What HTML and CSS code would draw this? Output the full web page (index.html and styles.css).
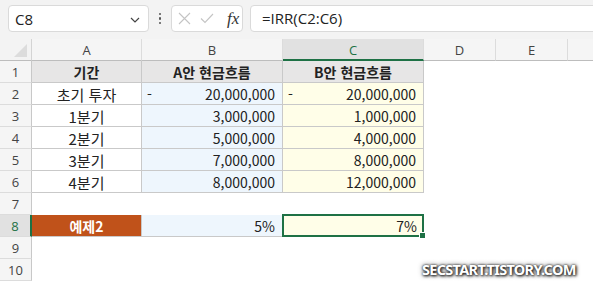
FILE: index.html
```html
<!DOCTYPE html>
<html lang="ko">
<head>
<meta charset="utf-8">
<link rel="stylesheet" href="styles.css">
</head>
<body>
<div class="toolbar">
  <div class="namebox"><span>C8</span>
    <svg class="chev" width="10" height="6" viewBox="0 0 10 6"><path d="M1 1 L5 5 L9 1" fill="none" stroke="#444" stroke-width="1.2"/></svg>
  </div>
  <div class="dots"><i></i><i></i><i></i></div>
  <div class="fxbox">
    <svg width="13" height="13" viewBox="0 0 13 13"><path d="M1 1 L12 12 M12 1 L1 12" stroke="#c4c4c4" stroke-width="1.1" fill="none"/></svg>
    <svg width="14" height="11" viewBox="0 0 14 11"><path d="M1 5.5 L5 9.5 L13 1" stroke="#c4c4c4" stroke-width="1.1" fill="none"/></svg>
    <span class="fx">fx</span>
  </div>
  <div class="formula">=IRR(C2:C6)</div>
</div>
<div class="sheet">
  <div class="corner"></div>
  <div class="ch">A</div>
  <div class="ch">B</div>
  <div class="ch sel">C</div>
  <div class="ch">D</div>
  <div class="ch">E</div>
  <div class="ch last"></div>

  <div class="rh">1</div>
  <div class="c hd">기간</div>
  <div class="c hd">A안 현금흐름</div>
  <div class="c hd">B안 현금흐름</div>
  <div class="e"></div><div class="e"></div><div class="e"></div>

  <div class="rh">2</div>
  <div class="c ctr">초기 투자</div>
  <div class="c num blue"><span>-</span><span>20,000,000</span></div>
  <div class="c num yel"><span>-</span><span>20,000,000</span></div>
  <div class="e"></div><div class="e"></div><div class="e"></div>

  <div class="rh">3</div>
  <div class="c ctr">1분기</div>
  <div class="c num blue"><span></span><span>3,000,000</span></div>
  <div class="c num yel"><span></span><span>1,000,000</span></div>
  <div class="e"></div><div class="e"></div><div class="e"></div>

  <div class="rh">4</div>
  <div class="c ctr">2분기</div>
  <div class="c num blue"><span></span><span>5,000,000</span></div>
  <div class="c num yel"><span></span><span>4,000,000</span></div>
  <div class="e"></div><div class="e"></div><div class="e"></div>

  <div class="rh">5</div>
  <div class="c ctr">3분기</div>
  <div class="c num blue"><span></span><span>7,000,000</span></div>
  <div class="c num yel"><span></span><span>8,000,000</span></div>
  <div class="e"></div><div class="e"></div><div class="e"></div>

  <div class="rh">6</div>
  <div class="c ctr">4분기</div>
  <div class="c num blue"><span></span><span>8,000,000</span></div>
  <div class="c num yel"><span></span><span>12,000,000</span></div>
  <div class="e"></div><div class="e"></div><div class="e"></div>

  <div class="rh">7</div>
  <div class="e"></div><div class="e"></div><div class="e"></div><div class="e"></div><div class="e"></div><div class="e"></div>

  <div class="rh selr">8</div>
  <div class="c ex">예제2</div>
  <div class="c num blue"><span></span><span>5%</span></div>
  <div class="c num yel active"><span></span><span>7%</span><i class="handle"></i></div>
  <div class="e"></div><div class="e"></div><div class="e"></div>

  <div class="rh">9</div>
  <div class="e"></div><div class="e"></div><div class="e"></div><div class="e"></div><div class="e"></div><div class="e"></div>

  <div class="rh">10</div>
  <div class="e"></div><div class="e"></div><div class="e"></div><div class="e"></div><div class="e"></div><div class="e"></div>
</div>
<div class="watermark">SECSTART.TISTORY.COM</div>
</body>
</html>
```
FILE: styles.css
```css
* { box-sizing: border-box; }
html, body { margin: 0; padding: 0; }
body {
  width: 593px;
  height: 287px;
  overflow: hidden;
  background: #ffffff;
  font-family: "Noto Sans CJK KR", "Noto Sans", sans-serif;
  position: relative;
}
.toolbar {
  height: 39px;
  background: #f3f3f3;
  display: flex;
  align-items: flex-start;
  padding: 5px 0 0 8px;
  overflow: hidden;
}
.namebox {
  width: 141px;
  height: 27px;
  background: #fff;
  border: 1px solid #dadada;
  border-radius: 4px;
  display: flex;
  align-items: center;
  justify-content: space-between;
  padding: 0 8px 0 6px;
  font-family: "Open Sans", "Noto Sans", sans-serif;
  font-size: 15px;
  color: #222;
}
.chev { margin-top: 2px; }
.dots {
  width: 22px;
  height: 27px;
  display: flex;
  flex-direction: column;
  align-items: center;
  justify-content: center;
  gap: 2px;
}
.dots i { display: block; width: 2.5px; height: 2.5px; background: #555; border-radius: 50%; }
.fxbox {
  width: 72px;
  height: 27px;
  background: #fff;
  border: 1px solid #dadada;
  border-radius: 4px;
  display: flex;
  align-items: center;
  padding: 0 0 0 6px;
  gap: 9px;
}
.fx {
  font-family: "Liberation Serif", serif;
  font-style: italic;
  font-size: 17px;
  color: #333;
  margin-left: 4px;
}
.formula {
  flex: 1;
  margin-left: 7px;
  margin-right: -10px;
  height: 27px;
  background: #fff;
  border: 1px solid #dadada;
  border-radius: 4px;
  padding-left: 11px;
  font-family: "Open Sans", "Noto Sans", sans-serif;
  font-size: 15px;
  line-height: 25px;
  color: #222;
}
.sheet {
  display: grid;
  grid-template-columns: 32px 110px 141px 141px 72px 72px 1fr;
  grid-template-rows: 22px repeat(10, 22px);
  font-size: 14px;
  color: #222;
}
.corner {
  background: #f3f3f3;
  border-right: 1px solid #d4d4d4;
  border-bottom: 1px solid #bdbdbd;
  position: relative;
}
.corner::after {
  content: "";
  position: absolute;
  right: 4px;
  bottom: 3px;
  width: 0; height: 0;
  border-left: 13px solid transparent;
  border-bottom: 13px solid #dcdcdc;
}
.ch {
  background: #f5f5f5;
  border-right: 1px solid #dcdcdc;
  border-bottom: 1px solid #bdbdbd;
  display: flex;
  align-items: center;
  justify-content: center;
  font-family: "Open Sans", "Noto Sans", sans-serif;
  font-size: 13px;
  color: #444;
  padding-top: 1px;
}
.ch.sel {
  background: #e1e1e1;
  color: #1e7145;
  border-bottom: 2px solid #1e7145;
}
.ch.last { border-right: none; }
.rh {
  background: #f5f5f5;
  border-right: 1px solid #c8c8c8;
  border-bottom: 1px solid #dcdcdc;
  display: flex;
  align-items: center;
  justify-content: center;
  font-family: "Open Sans", "Noto Sans", sans-serif;
  font-size: 13px;
  color: #444;
}
.rh.selr {
  background: #e1e1e1;
  color: #1e7145;
  border-right: 2px solid #1e7145;
}
.e { background: #fff; }
.c {
  border-right: 1px solid #c9c9c9;
  border-bottom: 1px solid #c9c9c9;
  display: flex;
  align-items: center;
  padding-top: 1px;
}
.hd {
  background: #e7e6e6;
  justify-content: center;
  font-weight: 700;
}
.ctr { justify-content: center; background: #fff; font-size: 15px; }
.num {
  justify-content: space-between;
  padding: 1px 7px 0 5px;
}
.blue { background: #eef6fd; }
.yel { background: #fffee8; }
.ex {
  background: #c0521a;
  color: #fff;
  font-weight: 700;
  justify-content: center;
}
.active {
  position: relative;
  border: 2px solid #1e7145;
  margin: -1px 0 0 -1px;
  padding: 1px 5px 0 5px;
}
.handle {
  position: absolute;
  right: -4px;
  bottom: -4px;
  width: 7px;
  height: 7px;
  background: #1e7145;
  border: 1px solid #fff;
}
.watermark {
  position: absolute;
  left: 422px;
  top: 259px;
  font-family: "Noto Sans", sans-serif;
  font-weight: 700;
  font-size: 14.5px;
  letter-spacing: -0.7px;
  color: #fff;
  text-shadow: 0 0 2px #333, 1px 1px 3px #000, 0 0 5px #555;
}
```
